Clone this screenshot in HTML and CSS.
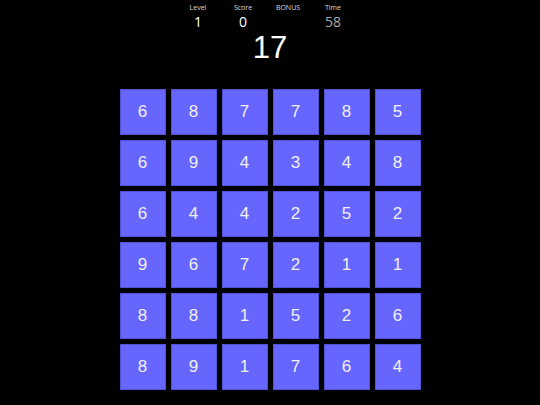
FILE: index.html
```html
<!DOCTYPE html>
<html lang="en">
<head>
<meta charset="UTF-8">
<meta name="viewport" content="width=device-width, initial-scale=1.0">
<title>Number Grid</title>
<link rel="stylesheet" href="styles.css">
</head>
<body>

<div class="game">
  <div class="stats">
    <div class="stat">
      <div class="label">Level</div>
      <div class="value">1</div>
    </div>
    <div class="stat">
      <div class="label">Score</div>
      <div class="value">0</div>
    </div>
    <div class="stat">
      <div class="label">BONUS</div>
      <div class="value"></div>
    </div>
    <div class="stat">
      <div class="label">Time</div>
      <div class="value time">58</div>
    </div>
  </div>

  <div class="target">17</div>

  <div class="board" id="board"></div>
</div>

<script>
  const cells = [
    6, 8, 7, 7, 8, 5,
    6, 9, 4, 3, 4, 8,
    6, 4, 4, 2, 5, 2,
    9, 6, 7, 2, 1, 1,
    8, 8, 1, 5, 2, 6,
    8, 9, 1, 7, 6, 4
  ];

  const board = document.getElementById('board');
  cells.forEach(function(n) {
    const tile = document.createElement('div');
    tile.className = 'tile';
    tile.textContent = n;
    board.appendChild(tile);
  });
</script>

</body>
</html>
```
FILE: styles.css
```css
body {
  margin: 0;
  padding: 0;
  background-color: #000;
  color: #fff;
  font-family: "Open Sans", "Liberation Sans", sans-serif;
}
.game {
  display: flex;
  flex-direction: column;
  align-items: center;
  padding-top: 3px;
}
.stats {
  display: flex;
  padding-right: 9px;
}
.stat {
  width: 45px;
  text-align: center;
}
.label {
  font-size: 7px;
  line-height: 10px;
  color: #ddd;
}
.value {
  font-size: 14px;
  line-height: 16px;
  height: 16px;
  margin-top: 1px;
}
.time {
  color: #aaa;
}
.target {
  font-family: "Liberation Sans", Arial, sans-serif;
  font-size: 31px;
  line-height: 36px;
}
.board {
  display: grid;
  grid-template-columns: repeat(6, 46px);
  grid-auto-rows: 46px;
  gap: 5px;
  margin-top: 23px;
}
.tile {
  display: flex;
  align-items: center;
  justify-content: center;
  background-color: #6666ff;
  box-shadow: inset 0 0 0 1px #5252d6;
  color: #f0f0f0;
  font-family: "Liberation Sans", Arial, sans-serif;
  font-size: 17px;
}
```
